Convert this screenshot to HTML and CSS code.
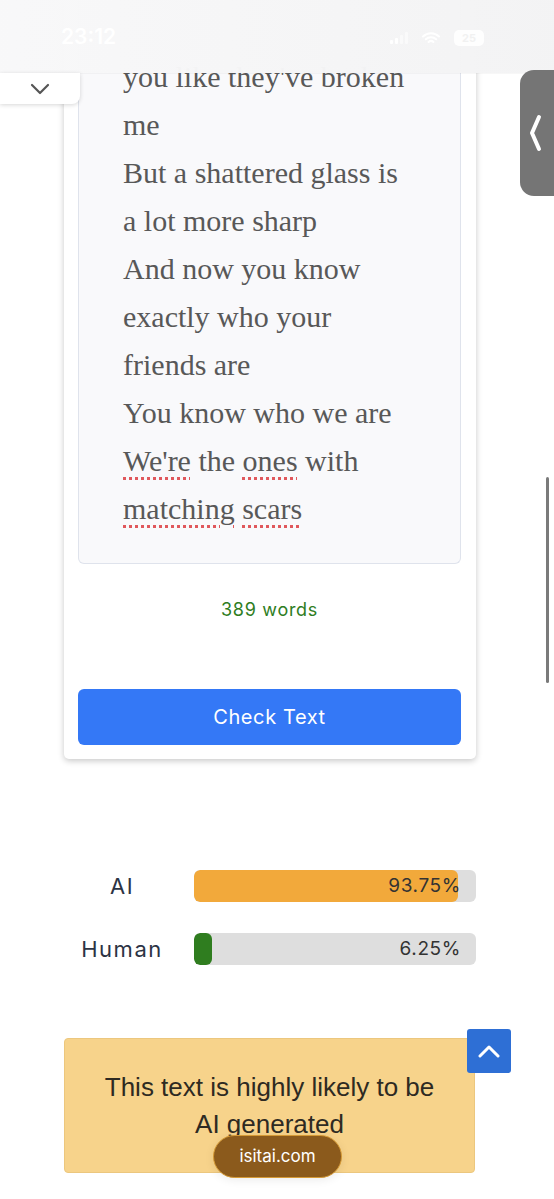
FILE: index.html
```html
<!DOCTYPE html>
<html lang="en">
<head>
<meta charset="utf-8">
<title>Is it AI</title>
<link rel="stylesheet" href="styles.css">
</head>
<body>
<main class="page">
  <section class="card">
    <div class="editor">
      <span class="line">you like they've broken</span>
      <span class="line">me</span>
      <span class="line">But a shattered glass is</span>
      <span class="line">a lot more sharp</span>
      <span class="line">And now you know</span>
      <span class="line">exactly who your</span>
      <span class="line">friends are</span>
      <span class="line">You know who we are</span>
      <span class="line"><span class="typo">We're</span> the <span class="typo">ones</span> with</span>
      <span class="line"><span class="typo">matching</span> <span class="typo">scars</span></span>
    </div>
    <p class="count">389 words</p>
    <button class="check">Check Text</button>
  </section>

  <section class="results">
    <div class="row">
      <span class="label">AI</span>
      <div class="track"><div class="fill fill-ai" style="width:93.75%"></div><span class="pct">93.75%</span></div>
    </div>
    <div class="row">
      <span class="label">Human</span>
      <div class="track"><div class="fill fill-human" style="width:6.25%"></div><span class="pct">6.25%</span></div>
    </div>
  </section>

  <section class="verdict">
    <p>This text is highly likely to be AI generated</p>
  </section>
</main>

<header class="statusbar">
  <span class="time">23:12</span>
  <div class="sys">
    <svg width="18" height="12" viewBox="0 0 18 12"><rect x="0" y="8" width="3" height="4" rx="1" fill="#fff"/><rect x="5" y="6" width="3" height="6" rx="1" fill="#fff"/><rect x="10" y="3" width="3" height="9" rx="1" fill="#fff" opacity=".5"/><rect x="15" y="0" width="3" height="12" rx="1" fill="#fff" opacity=".5"/></svg>
    <svg width="18" height="13" viewBox="0 0 18 13"><path d="M1 4.5a11.5 11.5 0 0 1 16 0M3.8 7.3a7.5 7.5 0 0 1 10.4 0M6.6 10a3.5 3.5 0 0 1 4.8 0" stroke="#fff" stroke-width="2" fill="none" stroke-linecap="round"/></svg>
    <span class="battery">25</span>
  </div>
</header>

<div class="tab-down">
  <svg width="20" height="12" viewBox="0 0 20 12"><path d="M2 2l8 8 8-8" stroke="#555" stroke-width="2.2" fill="none" stroke-linecap="round" stroke-linejoin="round"/></svg>
</div>

<div class="side-tab">
  <svg width="14" height="38" viewBox="0 0 14 38"><path d="M10 3L3 19l7 16" stroke="#fff" stroke-width="4" fill="none" stroke-linecap="round" stroke-linejoin="round"/></svg>
</div>

<div class="scrollbar"></div>

<button class="to-top" aria-label="Back to top">
  <svg width="22" height="14" viewBox="0 0 22 14"><path d="M2 12L11 3l9 9" stroke="#fff" stroke-width="3" fill="none" stroke-linecap="round" stroke-linejoin="round"/></svg>
</button>

<div class="site-pill">isitai.com</div>
</body>
</html>
```

FILE: styles.css
```css
html, body {
  margin: 0;
  padding: 0;
  background: #ffffff;
}

body {
  width: 554px;
  height: 1199px;
  overflow: hidden;
  position: relative;
  font-family: "Inter", "Roboto", sans-serif;
}

.page {
  padding-left: 64px;
}

.card {
  width: 412px;
  box-sizing: border-box;
  background: #fff;
  padding: 0 15px 14px 14px;
  border-radius: 0 0 5px 5px;
  box-shadow: 0 2px 6px rgba(0, 0, 0, 0.22);
}

.editor {
  background: #f9f9fb;
  border: 1px solid #dfe3ec;
  border-top: none;
  border-radius: 0 0 6px 6px;
  padding: 53px 20px 30px 44px;
  font-family: "Liberation Serif", "Times New Roman", serif;
  font-size: 30px;
  line-height: 48px;
  color: #585858;
}

.line {
  display: block;
  white-space: nowrap;
}

.typo {
  text-decoration: underline dotted #e0585c;
  text-decoration-thickness: 3px;
  text-underline-offset: 6px;
}

.count {
  margin: 35px 0 0;
  text-align: center;
  font-size: 18px;
  letter-spacing: 0.7px;
  line-height: 22px;
  color: #2e7d22;
}

.check {
  display: block;
  width: 100%;
  height: 56px;
  margin-top: 68px;
  border: none;
  border-radius: 6px;
  background: #3478f6;
  color: #fff;
  font-family: "Inter", "Roboto", sans-serif;
  font-size: 20px;
  letter-spacing: 0.6px;
}

.results {
  margin-top: 111px;
  width: 412px;
  display: flex;
  flex-direction: column;
  gap: 31px;
}

.row {
  display: flex;
  align-items: center;
  gap: 14px;
}

.label {
  width: 116px;
  text-align: center;
  font-size: 22px;
  color: #2c3344;
  letter-spacing: 1.5px;
}

.track {
  position: relative;
  flex: 1;
  height: 32px;
  background: #dedede;
  border-radius: 6px;
  overflow: hidden;
}

.fill {
  height: 100%;
  border-radius: 6px;
}

.fill-ai {
  background: #f2a93b;
}

.fill-human {
  background: #2f7d1f;
}

.pct {
  position: absolute;
  right: 15px;
  top: 0;
  line-height: 32px;
  font-size: 19px;
  letter-spacing: 0.6px;
  color: #333;
}

.verdict {
  margin-top: 73px;
  width: 411px;
  box-sizing: border-box;
  background: #f7d38b;
  border: 1px solid #ecc77e;
  border-radius: 4px;
  padding: 30px 38px 29px;
}

.verdict p {
  margin: 0;
  text-align: center;
  font-family: "Liberation Sans", Arial, sans-serif;
  font-size: 26px;
  line-height: 37px;
  color: #2e2a22;
}

.statusbar {
  position: absolute;
  top: 0;
  left: 0;
  width: 554px;
  height: 73px;
  background: linear-gradient(90deg, rgba(248, 248, 249, 0.98), rgba(243, 243, 244, 0.98));
  box-shadow: 0 1px 0 rgba(0, 0, 0, 0.03);
}

.time {
  position: absolute;
  left: 61px;
  top: 24px;
  font-family: "Inter", sans-serif;
  font-weight: 600;
  font-size: 21px;
  color: #fff;
}

.sys {
  position: absolute;
  right: 70px;
  top: 30px;
  display: flex;
  align-items: center;
  gap: 14px;
}

.battery {
  display: inline-block;
  width: 30px;
  height: 16px;
  border-radius: 5px;
  background: rgba(255, 255, 255, 0.9);
  font-size: 11px;
  line-height: 16px;
  text-align: center;
  color: #f1f1f1;
  font-weight: 700;
}

.tab-down {
  position: absolute;
  left: 0;
  top: 73px;
  width: 80px;
  height: 31px;
  background: #fff;
  border-radius: 0 0 8px 0;
  box-shadow: 0 1px 4px rgba(0, 0, 0, 0.16);
  display: flex;
  align-items: center;
  justify-content: center;
}

.side-tab {
  position: absolute;
  right: 0;
  top: 70px;
  width: 34px;
  height: 126px;
  background: #757575;
  border-radius: 14px 0 0 14px;
  display: flex;
  align-items: center;
  padding-left: 9px;
  box-sizing: border-box;
}

.scrollbar {
  position: absolute;
  right: 5px;
  top: 477px;
  width: 3px;
  height: 206px;
  border-radius: 2px;
  background: #7a7a7a;
}

.to-top {
  position: absolute;
  left: 467px;
  top: 1029px;
  width: 44px;
  height: 44px;
  border: none;
  border-radius: 3px;
  background: #2e6fd5;
  display: flex;
  align-items: center;
  justify-content: center;
  padding: 0;
}

.site-pill {
  position: absolute;
  left: 213px;
  top: 1135px;
  width: 129px;
  height: 43px;
  box-sizing: border-box;
  border: 1px solid #d69a35;
  border-radius: 22px;
  background: #8b5a1c;
  color: #fff;
  font-family: "Inter", sans-serif;
  font-size: 17px;
  line-height: 41px;
  text-align: center;
  box-shadow: 0 2px 10px rgba(0, 0, 0, 0.08);
}
```
